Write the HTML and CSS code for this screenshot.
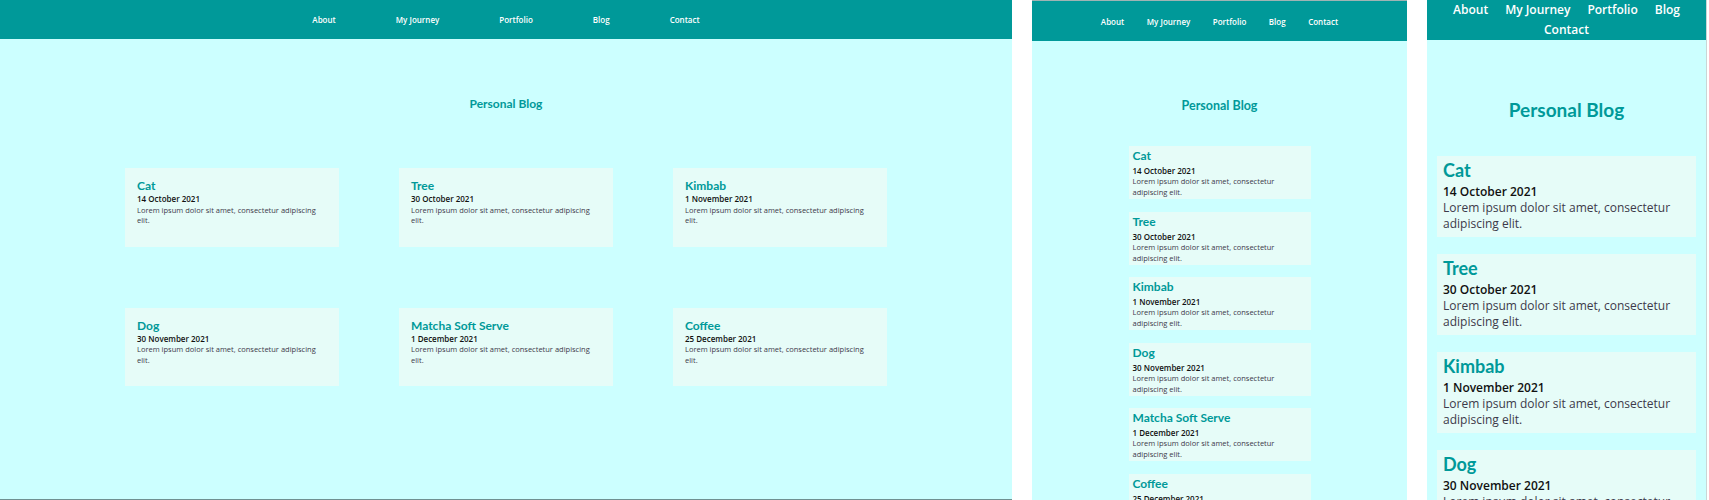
FILE: index.html
```html
<!DOCTYPE html>
<html lang="en">
<head>
<meta charset="utf-8">
<title>Personal Blog – responsive views</title>
<link rel="stylesheet" href="styles.css">
</head>
<body>
<div class="shot">

  <section class="frame desktop">
    <nav class="topnav">
      <a href="#">About</a><a href="#">My Journey</a><a href="#">Portfolio</a><a href="#">Blog</a><a href="#">Contact</a>
    </nav>
    <main class="blog">
      <h1 class="blog-title">Personal Blog</h1>
      <div class="posts">
        <article class="post"><h2 class="post-title">Cat</h2><p class="post-date">14 October 2021</p><p class="post-text">Lorem ipsum dolor sit amet, consectetur adipiscing elit.</p></article>
        <article class="post"><h2 class="post-title">Tree</h2><p class="post-date">30 October 2021</p><p class="post-text">Lorem ipsum dolor sit amet, consectetur adipiscing elit.</p></article>
        <article class="post"><h2 class="post-title">Kimbab</h2><p class="post-date">1 November 2021</p><p class="post-text">Lorem ipsum dolor sit amet, consectetur adipiscing elit.</p></article>
        <article class="post"><h2 class="post-title">Dog</h2><p class="post-date">30 November 2021</p><p class="post-text">Lorem ipsum dolor sit amet, consectetur adipiscing elit.</p></article>
        <article class="post"><h2 class="post-title">Matcha Soft Serve</h2><p class="post-date">1 December 2021</p><p class="post-text">Lorem ipsum dolor sit amet, consectetur adipiscing elit.</p></article>
        <article class="post"><h2 class="post-title">Coffee</h2><p class="post-date">25 December 2021</p><p class="post-text">Lorem ipsum dolor sit amet, consectetur adipiscing elit.</p></article>
      </div>
    </main>
  </section>

  <section class="frame tablet">
    <nav class="topnav">
      <a href="#">About</a><a href="#">My Journey</a><a href="#">Portfolio</a><a href="#">Blog</a><a href="#">Contact</a>
    </nav>
    <main class="blog">
      <h1 class="blog-title">Personal Blog</h1>
      <div class="posts">
        <article class="post"><h2 class="post-title">Cat</h2><p class="post-date">14 October 2021</p><p class="post-text">Lorem ipsum dolor sit amet, consectetur adipiscing elit.</p></article>
        <article class="post"><h2 class="post-title">Tree</h2><p class="post-date">30 October 2021</p><p class="post-text">Lorem ipsum dolor sit amet, consectetur adipiscing elit.</p></article>
        <article class="post"><h2 class="post-title">Kimbab</h2><p class="post-date">1 November 2021</p><p class="post-text">Lorem ipsum dolor sit amet, consectetur adipiscing elit.</p></article>
        <article class="post"><h2 class="post-title">Dog</h2><p class="post-date">30 November 2021</p><p class="post-text">Lorem ipsum dolor sit amet, consectetur adipiscing elit.</p></article>
        <article class="post"><h2 class="post-title">Matcha Soft Serve</h2><p class="post-date">1 December 2021</p><p class="post-text">Lorem ipsum dolor sit amet, consectetur adipiscing elit.</p></article>
        <article class="post"><h2 class="post-title">Coffee</h2><p class="post-date">25 December 2021</p><p class="post-text">Lorem ipsum dolor sit amet, consectetur adipiscing elit.</p></article>
      </div>
    </main>
  </section>

  <section class="frame mobile">
    <nav class="topnav">
      <a href="#">About</a><a href="#">My Journey</a><a href="#">Portfolio</a><a href="#">Blog</a><a href="#">Contact</a>
    </nav>
    <main class="blog">
      <h1 class="blog-title">Personal Blog</h1>
      <div class="posts">
        <article class="post"><h2 class="post-title">Cat</h2><p class="post-date">14 October 2021</p><p class="post-text">Lorem ipsum dolor sit amet, consectetur adipiscing elit.</p></article>
        <article class="post"><h2 class="post-title">Tree</h2><p class="post-date">30 October 2021</p><p class="post-text">Lorem ipsum dolor sit amet, consectetur adipiscing elit.</p></article>
        <article class="post"><h2 class="post-title">Kimbab</h2><p class="post-date">1 November 2021</p><p class="post-text">Lorem ipsum dolor sit amet, consectetur adipiscing elit.</p></article>
        <article class="post"><h2 class="post-title">Dog</h2><p class="post-date">30 November 2021</p><p class="post-text">Lorem ipsum dolor sit amet, consectetur adipiscing elit.</p></article>
        <article class="post"><h2 class="post-title">Matcha Soft Serve</h2><p class="post-date">1 December 2021</p><p class="post-text">Lorem ipsum dolor sit amet, consectetur adipiscing elit.</p></article>
        <article class="post"><h2 class="post-title">Coffee</h2><p class="post-date">25 December 2021</p><p class="post-text">Lorem ipsum dolor sit amet, consectetur adipiscing elit.</p></article>
      </div>
    </main>
  </section>

</div>
</body>
</html>
```

FILE: styles.css
```css
* { box-sizing: border-box; }

html, body {
  margin: 0;
  padding: 0;
  background: #ffffff;
}

.shot {
  display: flex;
  gap: 20px;
  height: 500px;
  overflow: hidden;
}

.frame {
  flex: none;
  height: 500px;
  overflow: hidden;
  background: #ccffff;
  font-family: "Open Sans", "Noto Sans", sans-serif;
}

.topnav {
  display: flex;
  justify-content: center;
  align-items: center;
  background: #009999;
}

.topnav a {
  color: #ffffff;
  text-decoration: none;
  font-weight: 600;
  white-space: nowrap;
}

.blog-title {
  margin: 0;
  text-align: center;
  color: #009999;
  font-family: "Lato", "Noto Sans", sans-serif;
  font-weight: 700;
}

.post {
  background: #e6fcf8;
}

.post-title {
  margin: 0;
  color: #009999;
  font-family: "Lato", "Noto Sans", sans-serif;
  font-weight: 700;
}

.post-date {
  margin: 0;
  color: #111111;
  font-weight: 600;
}

.post-text {
  margin: 0;
  color: #3d3a4a;
}

/* ---------- desktop ---------- */
.desktop {
  width: 1012px;
  border-bottom: 1px solid #6f9091;
}

.desktop .topnav {
  height: 39px;
  gap: 60px;
  font-size: 8px;
}

.desktop .blog { padding-top: 57px; }

.desktop .blog-title {
  font-size: 12px;
  line-height: 16px;
  margin-bottom: 56px;
}

.desktop .posts {
  display: grid;
  grid-template-columns: repeat(3, 214px);
  justify-content: center;
  gap: 61px 60px;
}

.desktop .post { padding: 10px 12px 21px; }
.desktop .post-title { font-size: 12px; line-height: 15px; margin-bottom: 1px; }
.desktop .post-date { font-size: 8px; line-height: 10.5px; }
.desktop .post-text { font-size: 7.5px; line-height: 10.5px; }

/* ---------- tablet ---------- */
.tablet {
  width: 375px;
  border-top: 1px solid #9fb4b4;
}

.tablet .topnav {
  height: 40px;
  gap: 22.5px;
  font-size: 8px;
}

.tablet .blog { padding-top: 57px; }

.tablet .blog-title {
  font-size: 12.5px;
  line-height: 16px;
  margin-bottom: 32px;
}

.tablet .posts {
  display: flex;
  flex-direction: column;
  align-items: center;
  gap: 12.5px;
}

.tablet .post { width: 182px; padding: 2px 4px 1px; }
.tablet .post-title { font-size: 12px; line-height: 15px; margin-bottom: 2px; }
.tablet .post-date { font-size: 8px; line-height: 11px; }
.tablet .post-text { font-size: 7.5px; line-height: 11px; }

/* ---------- mobile ---------- */
.mobile {
  width: 280px;
  border-right: 1px solid #c9d6d6;
}

.mobile .topnav {
  flex-wrap: wrap;
  column-gap: 17px;
  padding: 0 10px;
  font-size: 12px;
  line-height: 20px;
}

.mobile .blog { padding-top: 58px; }

.mobile .blog-title {
  font-size: 19px;
  line-height: 23px;
  margin-bottom: 35px;
}

.mobile .posts {
  display: flex;
  flex-direction: column;
  gap: 17px;
  padding: 0 10px;
}

.mobile .post { padding: 3px 6px 5px; }
.mobile .post-title { font-size: 18px; line-height: 22px; margin-bottom: 3px; }
.mobile .post-date,
.mobile .post-text { font-size: 12px; line-height: 16px; }
```
